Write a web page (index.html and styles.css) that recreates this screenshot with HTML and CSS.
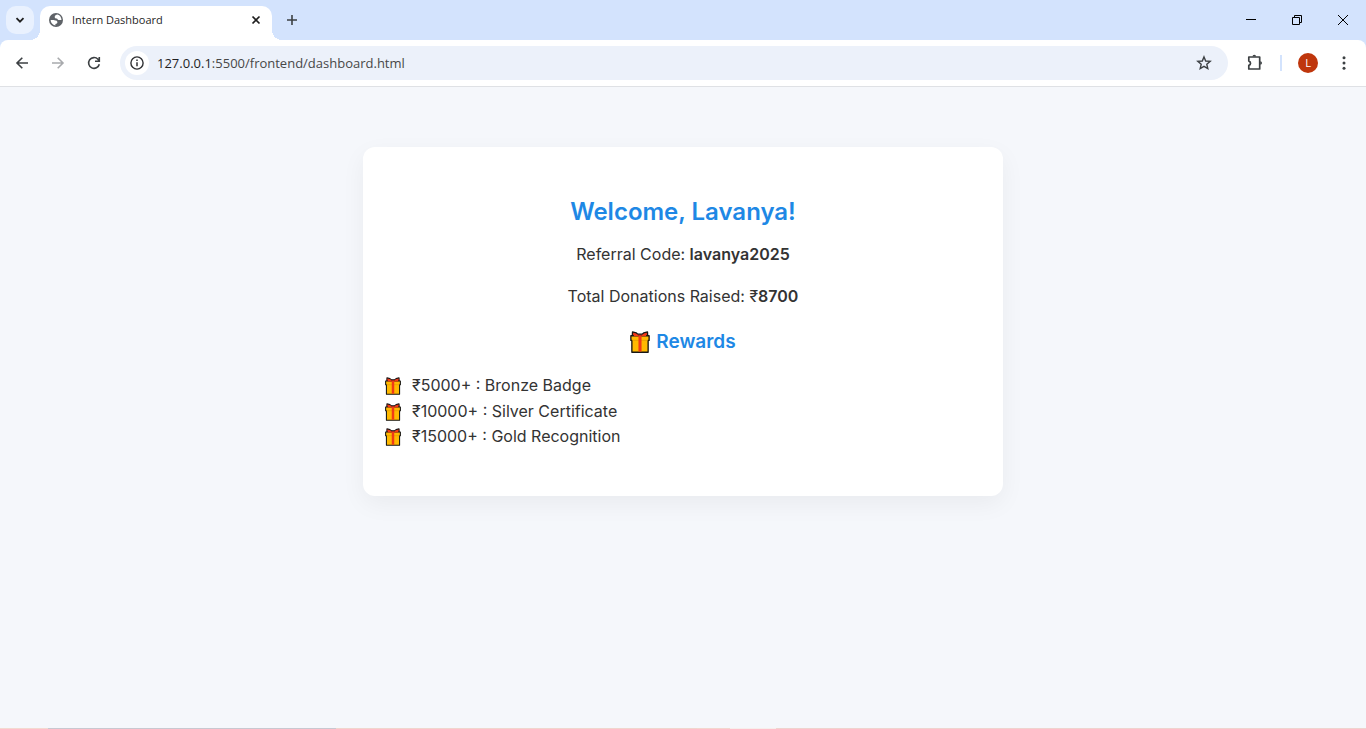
FILE: index.html
```html
<!DOCTYPE html>
<html lang="en">
<head>
<meta charset="utf-8">
<title>Intern Dashboard</title>
<link rel="stylesheet" href="styles.css">
</head>
<body>
<svg class="sprite" aria-hidden="true">
  <symbol id="gift" viewBox="0 0 18 20">
    <path d="M2 5 2.200.8 5.500 1.700 7 2.900h4l1.500-1.200 3.300-.9L16 5z" fill="#e8321a" stroke="#161616" stroke-width="1.200" stroke-linejoin="round"/>
    <path d="M.7 4.300h16.600v4.300h-.9v10.700H1.600V8.600H.7z" fill="#ffb900" stroke="#161616" stroke-width="1.200" stroke-linejoin="round"/>
    <path d="M2.200 8.500h13.600" stroke="#e59a00" stroke-width=".7"/>
    <path d="M7.600 4h2.800v14.700H7.600z" fill="#f03a17"/>
    <path d="M3 1.900 6 2.800l1.500 1.400h3L12 2.800l3-.9-.5 2.900h-11z" fill="#f03a17"/>
  </symbol>
</svg>
<header class="browser">
  <div class="tab-strip">
    <button class="tab-search" aria-label="Search tabs">
      <svg width="10" height="10" viewBox="0 0 10 10"><path d="M1.500 3.200 5 6.700l3.500-3.500" fill="none" stroke="#1f1f1f" stroke-width="1.800"/></svg>
    </button>
    <div class="tab">
      <svg width="16" height="16" viewBox="0 0 16 16"><circle cx="8" cy="8" r="7" fill="#5f6368"/><path d="M9.600 2.600c-1.600.2-2.900 1.100-2.900 2.400 0 1.200 1 1.500 2 1.600.9.100.8 1.400 1.900 1.400h2.900c0-2.400-1.500-4.600-3.900-5.400zM2.600 7.900c.1 2.700 2 5 4.800 5.500v-1.500c1.200-.1 2-.8 2-1.700 0-1.200-.9-1.700-2-1.700-1 0-.9-.6-1.800-.6z" fill="#fff"/></svg>
      <span class="tab-title">Intern Dashboard</span>
      <button class="plain tab-close" aria-label="Close tab">
        <svg width="10" height="10" viewBox="0 0 10 10"><path d="m1.500 1.500 7 7m0-7-7 7" stroke="#1f1f1f" stroke-width="1.700"/></svg>
      </button>
    </div>
    <button class="plain new-tab" aria-label="New tab">
      <svg width="12" height="12" viewBox="0 0 12 12"><path d="M6 1v10M1 6h10" stroke="#3c4043" stroke-width="1.600"/></svg>
    </button>
    <div class="window-controls">
      <button class="plain" aria-label="Minimize"><svg width="12" height="12" viewBox="0 0 12 12"><path d="M1 5.500h10" stroke="#000"/></svg></button>
      <button class="plain" aria-label="Restore"><svg width="12" height="12" viewBox="0 0 12 12"><path d="M1.500 3.500h7v7h-7zM3.500 3.500v-2h7v7h-2" fill="none" stroke="#000"/></svg></button>
      <button class="plain" aria-label="Close"><svg width="12" height="12" viewBox="0 0 12 12"><path d="m1 1 10 10m0-10L1 11" stroke="#000"/></svg></button>
    </div>
  </div>
  <div class="toolbar">
    <nav class="nav-buttons" aria-label="History">
      <button class="plain" aria-label="Back"><svg width="16" height="16" viewBox="0 0 16 16"><path d="M14 8H3m5.300-5.300L3 8l5.300 5.300" fill="none" stroke="#3c4043" stroke-width="1.600"/></svg></button>
      <button class="plain" aria-label="Forward" disabled><svg width="16" height="16" viewBox="0 0 16 16"><path d="M2 8h11M7.700 2.700 13 8l-5.300 5.300" fill="none" stroke="#a8aaad" stroke-width="1.600"/></svg></button>
      <button class="plain" aria-label="Reload"><svg width="16" height="16" viewBox="0 0 16 16"><path d="M13.300 9.200A5.400 5.400 0 1 1 12 4.300l1.200 1.500M13.300 2v4.300H9" fill="none" stroke="#3c4043" stroke-width="1.600"/></svg></button>
    </nav>
    <div class="address">
      <button class="plain site-info" aria-label="Site information"><svg width="16" height="16" viewBox="0 0 16 16"><circle cx="8" cy="8" r="6.100" fill="none" stroke="#303134" stroke-width="1.400"/><path d="M8 7.200v4M8 4.600v1.500" stroke="#303134" stroke-width="1.500"/></svg></button>
      <span class="url"><b>127.0.0.1</b>:5500/frontend/dashboard.html</span>
      <button class="plain" aria-label="Bookmark this tab"><svg width="16" height="16" viewBox="0 0 16 16"><path d="m8 1.900 1.700 4.100 4.500.4-3.400 2.900 1 4.300L8 11.300l-3.800 2.300 1-4.300L1.800 6.400 6.300 6z" fill="none" stroke="#3c4043" stroke-width="1.400"/></svg></button>
    </div>
    <button class="plain extensions" aria-label="Extensions"><svg width="18" height="18" viewBox="0 0 18 18"><path d="M2.800 3h10.900v12H2.800v-3.700c2.300-.4 2.300-3.800 0-4.200z" fill="none" stroke="#3c4043" stroke-width="1.700" stroke-linejoin="round"/><path d="M6.500 2.500a1.800 1.800 0 0 1 3.600 0zM14.200 7.200a1.800 1.800 0 0 1 0 3.600z" fill="#3c4043"/></svg></button>
    <span class="divider"></span>
    <button class="avatar" aria-label="Profile">L</button>
    <button class="plain menu" aria-label="Menu"><svg width="16" height="16" viewBox="0 0 16 16" fill="#3c4043"><circle cx="8" cy="2.700" r="1.500"/><circle cx="8" cy="8" r="1.500"/><circle cx="8" cy="13.300" r="1.500"/></svg></button>
  </div>
</header>
<main class="page">
  <section class="card">
    <h1>Welcome, Lavanya!</h1>
    <p>Referral Code: <strong>lavanya2025</strong></p>
    <p>Total Donations Raised: ₹<strong>8700</strong></p>
    <h2><svg class="gift" aria-hidden="true"><use href="#gift"/></svg>Rewards</h2>
    <ul>
      <li><svg class="gift" aria-hidden="true"><use href="#gift"/></svg>₹5000+ : Bronze Badge</li>
      <li><svg class="gift" aria-hidden="true"><use href="#gift"/></svg>₹10000+ : Silver Certificate</li>
      <li><svg class="gift" aria-hidden="true"><use href="#gift"/></svg>₹15000+ : Gold Recognition</li>
    </ul>
  </section>
</main>
<div class="taskbar-edge"></div>
</body>
</html>
```
FILE: styles.css
```css
* { box-sizing: border-box; }

body {
  margin: 0;
  min-height: 100vh;
  display: flex;
  flex-direction: column;
  background: #f5f7fb;
  color: #333;
  font: 16px/1.6 Inter, sans-serif;
}

svg { display: block; flex: none; }
.sprite { position: absolute; width: 0; height: 0; }

button { font: inherit; padding: 0; border: 0; }

.plain {
  display: grid;
  place-items: center;
  width: 36px;
  height: 28px;
  background: none;
}

.browser {
  background: #d3e3fd;
  font-family: "Open Sans", "Noto Sans", sans-serif;
}

.tab-strip {
  display: flex;
  align-items: center;
  height: 40px;
  padding-left: 6px;
}

.tab-search {
  display: grid;
  place-items: center;
  width: 28px;
  height: 28px;
  border-radius: 10px;
  background: #e9f1fe;
}

.tab {
  position: relative;
  align-self: flex-end;
  display: flex;
  align-items: center;
  gap: 8px;
  width: 232px;
  height: 34px;
  margin-left: 6px;
  padding: 0 8px 6px;
  border-radius: 10px 10px 0 0;
  background: #fff;
}

.tab::before,
.tab::after {
  content: "";
  position: absolute;
  bottom: 0;
  width: 10px;
  height: 10px;
}
.tab::before { right: 100%; background: radial-gradient(circle at 0 0, transparent 10px, #fff 10px); }
.tab::after { left: 100%; background: radial-gradient(circle at 100% 0, transparent 10px, #fff 10px); }

.tab-title { flex: 1; color: #1f1f1f; font-size: 11px; line-height: 16px; }
.tab-close { width: 16px; height: 16px; }
.new-tab { width: 40px; }

.window-controls { display: flex; margin-left: auto; }
.window-controls .plain { width: 46px; }

.toolbar {
  display: flex;
  align-items: center;
  height: 47px;
  padding: 0 4px;
  border-bottom: 1px solid #dfe1e5;
  border-radius: 8px 8px 0 0;
  background: #fff;
}

.nav-buttons { display: flex; }

.address {
  flex: 1;
  display: flex;
  align-items: center;
  height: 34px;
  margin: 0 9px 0 8px;
  padding: 0 6px 0 5px;
  border-radius: 17px;
  background: #ecf1fa;
}

.site-info { width: 24px; height: 24px; border-radius: 12px; background: #fff; }
.url { flex: 1; margin-left: 8px; color: #474747; font-size: 13px; line-height: 20px; }
.url b { color: #1f1f1f; font-weight: 400; }

.divider { width: 2px; height: 16px; margin: 0 16px 0 7px; background: #d3e3fd; }

.avatar {
  width: 20px;
  height: 20px;
  margin-right: 8px;
  border-radius: 50%;
  background: #bf360c;
  color: #fff;
  font-size: 11px;
  line-height: 20px;
}

.page { flex: 1; padding: 60px 20px; }

.card {
  max-width: 640px;
  margin: 0 auto;
  padding: 46px 22px;
  border-radius: 12px;
  background: #fff;
  box-shadow: 0 8px 24px rgba(0, 0, 0, 0.05);
  text-align: center;
}

h1, h2 { color: #1e88e5; font-weight: 600; }
h1 { margin: 0 0 11px; font-size: 24px; line-height: 38px; }
p { margin: 0 0 16px; }
strong { font-weight: 600; }

h2 {
  display: flex;
  justify-content: center;
  align-items: center;
  gap: 6px;
  margin: 18px 0 16px;
  font-size: 19px;
  line-height: 30px;
}
h2 .gift { width: 20px; height: 22px; }

ul { margin: 0; padding: 0; list-style: none; text-align: left; }
li { display: flex; align-items: center; gap: 11px; }
li .gift { width: 16px; height: 18px; }

.taskbar-edge {
  height: 1px;
  background: linear-gradient(90deg, #f3d9d0 48px, #c8c8d0 48px 336px, #f0d5cd 336px 697px, #f3d6ce 697px 730px, #f7eeeb 730px 776px, #efd3ce 776px);
}
```
